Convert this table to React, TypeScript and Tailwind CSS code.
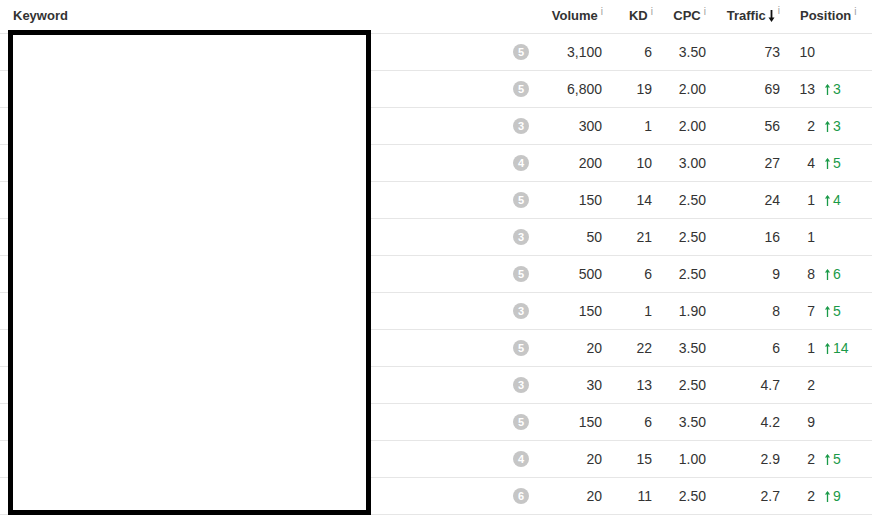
import React from "react";

type Row = [number, string, number, string, string, number, number | null];

const rows: Row[] = [
  [5, "3,100", 6, "3.50", "73", 10, null],
  [5, "6,800", 19, "2.00", "69", 13, 3],
  [3, "300", 1, "2.00", "56", 2, 3],
  [4, "200", 10, "3.00", "27", 4, 5],
  [5, "150", 14, "2.50", "24", 1, 4],
  [3, "50", 21, "2.50", "16", 1, null],
  [5, "500", 6, "2.50", "9", 8, 6],
  [3, "150", 1, "1.90", "8", 7, 5],
  [5, "20", 22, "3.50", "6", 1, 14],
  [3, "30", 13, "2.50", "4.7", 2, null],
  [5, "150", 6, "3.50", "4.2", 9, null],
  [4, "20", 15, "1.00", "2.9", 2, 5],
  [6, "20", 11, "2.50", "2.7", 2, 9],
];

const Info = () => (
  <span className="relative -top-[5px] ml-[3px] text-[10px] font-normal text-[#a0a0a0]">i</span>
);

const UpArrow = () => (
  <svg width="5" height="11" viewBox="0 0 5 11" className="mr-[3px]">
    <line x1="2.5" y1="1" x2="2.5" y2="11" stroke="#1a9a48" strokeWidth="1.3" />
    <polyline points="0.6,3.6 2.5,1 4.4,3.6" fill="none" stroke="#1a9a48" strokeWidth="1.2" />
  </svg>
);

const DownArrow = () => (
  <svg width="7" height="12" viewBox="0 0 7 12" className="ml-[2px]">
    <line x1="3.5" y1="0" x2="3.5" y2="10" stroke="#111" strokeWidth="1.8" />
    <polygon points="0.5,7.5 6.5,7.5 3.5,12" fill="#111" />
  </svg>
);

const grid = "grid grid-cols-[505px_32px_67px_50px_54px_74px_1fr]";

export default function App() {
  return (
    <div className="relative w-[872px] h-[518px] overflow-hidden bg-white font-['Liberation_Sans',Arial,sans-serif] text-[#333]">
      <div className={`${grid} h-[34px] items-center border-b border-[#e6e6e6] pb-[2px] text-[13px] font-bold text-[#333]`}>
        <div className="pl-[13px]">Keyword</div>
        <div />
        <div className="pr-[1px] text-right">
          Volume
          <Info />
        </div>
        <div className="pr-[1px] text-right">
          KD
          <Info />
        </div>
        <div className="pr-[2px] text-right">
          CPC
          <Info />
        </div>
        <div className="flex items-center justify-end pr-[2px]">
          Traffic
          <DownArrow />
          <Info />
        </div>
        <div className="pl-[18px]">
          Position
          <Info />
        </div>
      </div>
      {rows.map((r, i) => (
        <div
          key={i}
          className={`${grid} h-[37px] items-center border-b border-[#e6e6e6] text-[14px]`}
        >
          <div />
          <div className="flex justify-center">
            <span className="flex h-[16px] w-[16px] items-center justify-center rounded-full bg-[#c6c6c6] text-[11px] font-bold text-white">
              {r[0]}
            </span>
          </div>
          <div className="pr-[2px] text-right">{r[1]}</div>
          <div className="pr-[2px] text-right">{r[2]}</div>
          <div className="pr-[2px] text-right">{r[3]}</div>
          <div className="pr-[2px] text-right">{r[4]}</div>
          <div className="flex items-center">
            <span className="w-[33px] text-right">{r[5]}</span>
            {r[6] !== null && (
              <span className="ml-[10px] flex items-center text-[#1a9a48]">
                <UpArrow />
                {r[6]}
              </span>
            )}
          </div>
        </div>
      ))}
      <div className="absolute left-[8px] top-[30px] h-[485px] w-[363px] border-[5px] border-black bg-white" />
    </div>
  );
}
